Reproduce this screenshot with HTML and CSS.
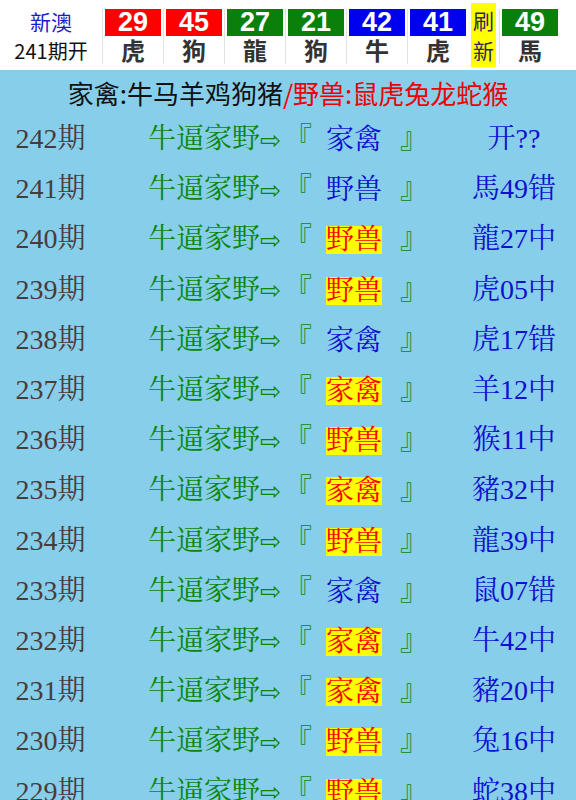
FILE: index.html
```html
<!DOCTYPE html>
<html lang="zh-CN">
<head>
  <meta charset="UTF-8">
  <meta name="viewport" content="width=device-width, initial-scale=1.0">
  <title>新澳 牛逼家野</title>
  <link rel="stylesheet" href="styles.css">
</head>
<body>
  <header class="draw">
    <div class="draw-title">
      <div class="draw-name">新澳</div>
      <div class="draw-issue">241期开</div>
    </div>
    <div class="ball"><span class="num red">29</span><span class="zodiac">虎</span></div>
    <div class="ball"><span class="num red">45</span><span class="zodiac">狗</span></div>
    <div class="ball"><span class="num green">27</span><span class="zodiac">龍</span></div>
    <div class="ball"><span class="num green">21</span><span class="zodiac">狗</span></div>
    <div class="ball"><span class="num blue">42</span><span class="zodiac">牛</span></div>
    <div class="ball"><span class="num blue">41</span><span class="zodiac">虎</span></div>
    <div class="refresh">刷<br>新</div>
    <div class="ball"><span class="num green">49</span><span class="zodiac">馬</span></div>
  </header>

  <section class="board">
    <h2 class="legend">家禽:牛马羊鸡狗猪<span class="wild">/野兽:鼠虎兔龙蛇猴</span></h2>

    <div class="row">
      <span class="issue">242期</span>
      <span class="tip">牛逼家野<span class="arrow">⇨</span>『<span class="pick">家禽</span>』</span>
      <span class="result">开??</span>
    </div>
    <div class="row">
      <span class="issue">241期</span>
      <span class="tip">牛逼家野<span class="arrow">⇨</span>『<span class="pick">野兽</span>』</span>
      <span class="result">馬49错</span>
    </div>
    <div class="row">
      <span class="issue">240期</span>
      <span class="tip">牛逼家野<span class="arrow">⇨</span>『<span class="pick hit">野兽</span>』</span>
      <span class="result">龍27中</span>
    </div>
    <div class="row">
      <span class="issue">239期</span>
      <span class="tip">牛逼家野<span class="arrow">⇨</span>『<span class="pick hit">野兽</span>』</span>
      <span class="result">虎05中</span>
    </div>
    <div class="row">
      <span class="issue">238期</span>
      <span class="tip">牛逼家野<span class="arrow">⇨</span>『<span class="pick">家禽</span>』</span>
      <span class="result">虎17错</span>
    </div>
    <div class="row">
      <span class="issue">237期</span>
      <span class="tip">牛逼家野<span class="arrow">⇨</span>『<span class="pick hit">家禽</span>』</span>
      <span class="result">羊12中</span>
    </div>
    <div class="row">
      <span class="issue">236期</span>
      <span class="tip">牛逼家野<span class="arrow">⇨</span>『<span class="pick hit">野兽</span>』</span>
      <span class="result">猴11中</span>
    </div>
    <div class="row">
      <span class="issue">235期</span>
      <span class="tip">牛逼家野<span class="arrow">⇨</span>『<span class="pick hit">家禽</span>』</span>
      <span class="result">豬32中</span>
    </div>
    <div class="row">
      <span class="issue">234期</span>
      <span class="tip">牛逼家野<span class="arrow">⇨</span>『<span class="pick hit">野兽</span>』</span>
      <span class="result">龍39中</span>
    </div>
    <div class="row">
      <span class="issue">233期</span>
      <span class="tip">牛逼家野<span class="arrow">⇨</span>『<span class="pick">家禽</span>』</span>
      <span class="result">鼠07错</span>
    </div>
    <div class="row">
      <span class="issue">232期</span>
      <span class="tip">牛逼家野<span class="arrow">⇨</span>『<span class="pick hit">家禽</span>』</span>
      <span class="result">牛42中</span>
    </div>
    <div class="row">
      <span class="issue">231期</span>
      <span class="tip">牛逼家野<span class="arrow">⇨</span>『<span class="pick hit">家禽</span>』</span>
      <span class="result">豬20中</span>
    </div>
    <div class="row">
      <span class="issue">230期</span>
      <span class="tip">牛逼家野<span class="arrow">⇨</span>『<span class="pick hit">野兽</span>』</span>
      <span class="result">兔16中</span>
    </div>
    <div class="row">
      <span class="issue">229期</span>
      <span class="tip">牛逼家野<span class="arrow">⇨</span>『<span class="pick hit">野兽</span>』</span>
      <span class="result">蛇38中</span>
    </div>
  </section>
</body>
</html>
```

FILE: styles.css
```css
body {
  margin: 0;
  padding: 0;
  background-color: #fff;
  font-family: "Noto Sans CJK SC", "Noto Sans", sans-serif;
}

/* latest draw strip */
.draw {
  display: flex;
  align-items: flex-start;
  height: 70px;
}

.draw-title {
  width: 102px;
  padding-top: 7px;
  text-align: center;
  line-height: 29px;
}

.draw-name {
  color: #1a1ac8;
  font-size: 21px;
}

.draw-issue {
  color: #111;
  font-size: 20px;
}

.ball {
  display: flex;
  flex-direction: column;
  width: 56px;
  margin-top: 9px;
  padding: 0 2px;
  border-left: 1px solid #e2e2e2;
}

.num {
  height: 27px;
  line-height: 27px;
  color: #fff;
  font-family: "Liberation Sans", Arial, sans-serif;
  font-weight: bold;
  font-size: 27px;
  text-align: center;
}

.red { background-color: #f00; }
.green { background-color: #0a800a; }
.blue { background-color: #0000f0; }

.zodiac {
  height: 28px;
  line-height: 28px;
  color: #333;
  font-weight: bold;
  font-size: 24px;
  text-align: center;
}

.refresh {
  width: 25px;
  margin: 3px 3px 0 3px;
  padding: 2px 0;
  background-color: #ff0;
  color: #2a2a55;
  font-size: 21px;
  line-height: 30px;
  text-align: center;
}

/* history board */
.board {
  background-color: #87ceea;
  padding-top: 4px;
  padding-bottom: 20px;
}

.legend {
  margin: 0;
  height: 37px;
  line-height: 37px;
  font-size: 26px;
  font-weight: normal;
  color: #111;
  text-align: center;
}

.wild {
  color: #e00;
}

.row {
  display: grid;
  grid-template-columns: 101px 360px 106px;
  box-sizing: border-box;
  height: 50.2px;
  padding-top: 6px;
  align-items: center;
  font-family: "Liberation Serif", "Noto Serif CJK SC", "Noto Sans CJK SC", serif;
  font-size: 28px;
  line-height: 34px;
  white-space: nowrap;
}

.issue {
  color: #4a3b3b;
  text-align: center;
}

.tip {
  display: flex;
  align-items: center;
  color: #0a870a;
  padding-left: 47px;
}

.arrow {
  width: 23px;
  margin-right: 1px;
  padding-top: 3px;
  font-family: "DejaVu Sans", sans-serif;
  font-size: 25px;
  line-height: 28px;
}

.pick {
  height: 28px;
  line-height: 28px;
  margin: 2px 18px 0 14px;
  color: #1010d0;
}

.pick.hit {
  background-color: #ff0;
  color: #f00;
}

.result {
  color: #1010d0;
  text-align: center;
}
```
